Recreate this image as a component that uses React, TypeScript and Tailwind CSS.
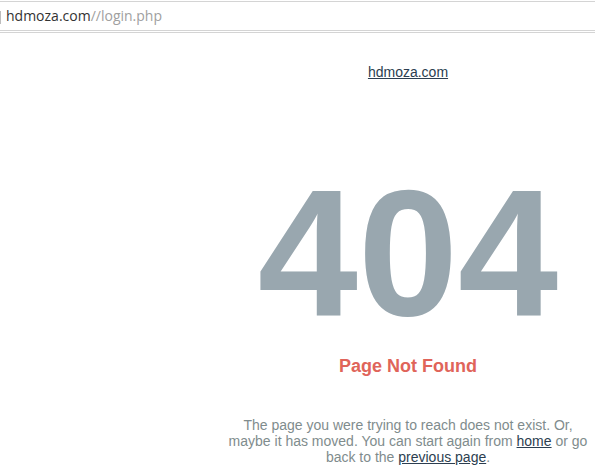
export default function App() {
  return (
    <div className="w-[595px] h-[467px] overflow-hidden bg-white" style={{ fontFamily: "Arial" }}>
      <div className="mt-[1px] h-[30px] border-t border-b border-[#d4d4d4] flex items-center relative">
        <span className="absolute left-0 top-[9px] h-[13px] w-[1px] bg-[#bdbdbd]" />
        <span className="pl-[6px] text-[14px] font-['Open_Sans',sans-serif] text-[#333] leading-none">
          hdmoza.com<span className="text-[#a0a0a0]">//login.php</span>
        </span>
      </div>
      <div className="h-[2px] border-b border-[#d4d4d4]" />

      <div className="flex">
        <div className="w-[220px] shrink-0" />
        <div className="w-[376px] shrink-0 flex flex-col items-center text-center font-['Liberation_Sans',Arial,sans-serif]">
          <a href="#" className="mt-[31px] text-[14px] leading-[16px] text-[#2c3e50] underline">
            hdmoza.com
          </a>
          <div className="mt-[83px] text-[180px] leading-[180px] font-bold text-[#99a7af]">404</div>
          <div className="mt-[12px] text-[18px] leading-[22px] font-bold text-[#e0645a]">Page Not Found</div>
          <p className="mt-[40px] px-[4px] text-[14px] leading-[16px] text-[#7f8c8d]">
            The page you were trying to reach does not exist. Or, maybe it has moved. You can start again from{" "}
            <a href="#" className="text-[#2c3e50] underline">home</a> or go back to the{" "}
            <a href="#" className="text-[#2c3e50] underline">previous page</a>.
          </p>
        </div>
      </div>
    </div>
  );
}
